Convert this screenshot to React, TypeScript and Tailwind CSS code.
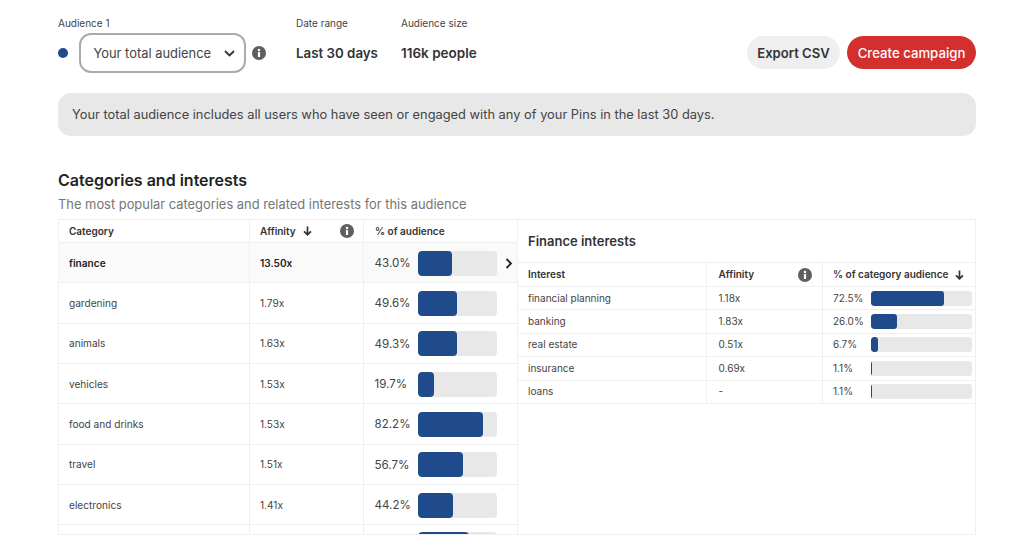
import React from "react";

const Info = ({ size = 14 }: { size?: number }) => (
  <svg width={size} height={size} viewBox="0 0 14 14" className="shrink-0">
    <circle cx="7" cy="7" r="7" fill="#5f5f5f" />
    <circle cx="7" cy="3.9" r="1.25" fill="#fff" />
    <rect x="5.9" y="6" width="2.2" height="5" rx="0.6" fill="#fff" />
  </svg>
);

const Arrow = () => (
  <svg width="9" height="10" viewBox="0 0 9 10" className="shrink-0">
    <path d="M4.5 0.5V8.5M1 5.3L4.5 8.8L8 5.3" fill="none" stroke="#333" strokeWidth="1.7" />
  </svg>
);

const Bar = ({ pct, w, h, small }: { pct: number; w: string; h: string; small?: boolean }) => (
  <div className={`${w} ${h} bg-[#e8e8e8] ${small ? "rounded-[3px]" : "rounded-[4px]"} overflow-hidden shrink-0`}>
    <div className={`h-full bg-[#1f4a8c] ${small ? "rounded-[3px]" : "rounded-[4px]"}`} style={{ width: `${pct}%` }} />
  </div>
);

const cats = [
  ["gardening", "1.79x", "49.6%", 49.6],
  ["animals", "1.63x", "49.3%", 49.3],
  ["vehicles", "1.53x", "19.7%", 19.7],
  ["food and drinks", "1.53x", "82.2%", 82.2],
  ["travel", "1.51x", "56.7%", 56.7],
  ["electronics", "1.41x", "44.2%", 44.2],
] as const;

const ints = [
  ["financial planning", "1.18x", "72.5%", 72.5],
  ["banking", "1.83x", "26.0%", 26],
  ["real estate", "0.51x", "6.7%", 6.7],
  ["insurance", "0.69x", "1.1%", 1.1],
  ["loans", "-", "1.1%", 1.1],
] as const;

const line = "border-[#f0f0f0]";

function CatRow({ r, bold }: { r: readonly [string, string, string, number]; bold?: boolean }) {
  return (
    <div className={`flex h-[40.35px] shrink-0 border-b ${line} ${bold ? "bg-[#fafafa]" : ""}`}>
      <div className={`w-[191px] shrink-0 border-r ${line} pl-[10px] pt-[1px] flex items-center text-[10.1px] ${bold ? "font-semibold text-[#222]" : "text-[#444]"}`}>{r[0]}</div>
      <div className={`w-[114px] shrink-0 border-r ${line} pl-[10px] pt-[1px] flex items-center text-[10.1px] ${bold ? "font-semibold text-[#222]" : "text-[#444]"}`}>{r[1]}</div>
      <div className="flex-1 flex items-center pl-[10.5px] pt-[1px] relative">
        <span className="w-[43.5px] shrink-0 pt-[1px] text-[11.6px] text-[#444]">{r[2]}</span>
        <Bar pct={r[3]} w="w-[79px]" h="h-[25px]" />
        {bold && (
          <svg width="8" height="11" viewBox="0 0 8 11" className="ml-[8px] shrink-0">
            <path d="M1.5 1L6 5.5L1.5 10" fill="none" stroke="#222" strokeWidth="1.8" />
          </svg>
        )}
      </div>
    </div>
  );
}

export default function App() {
  return (
    <div className="w-[1024px] h-[558px] overflow-hidden bg-white pl-[58px] pr-[48px] pt-[17px] font-['Inter',sans-serif] text-[#333]">
      <div className="flex items-start h-[54px]">
        <div className="w-[238px] shrink-0">
          <div className="text-[10px] leading-[13px] text-[#444]">Audience 1</div>
          <div className="flex items-center mt-[3px]">
            <span className="w-[10px] h-[10px] rounded-full bg-[#1f4a8c] shrink-0" />
            <div className="ml-[11px] w-[167px] h-[40px] pt-[1px] rounded-[12px] border-2 border-[#ababab] flex items-center justify-between pl-[12.5px] pr-[9px] text-[12.9px] text-[#444]">
              <span>Your total audience</span>
              <svg width="11" height="7" viewBox="0 0 11 7">
                <path d="M1 1L5.5 5.5L10 1" fill="none" stroke="#333" strokeWidth="1.8" />
              </svg>
            </div>
            <span className="ml-[6px]"><Info /></span>
          </div>
        </div>
        <div className="w-[105px] shrink-0">
          <div className="text-[10px] leading-[13px] text-[#444]">Date range</div>
          <div className="mt-[3px] h-[40px] pt-[1px] flex items-center text-[13.3px] font-semibold text-[#333]">Last 30 days</div>
        </div>
        <div className="shrink-0">
          <div className="text-[10px] leading-[13px] text-[#444]">Audience size</div>
          <div className="mt-[3px] h-[40px] flex items-center text-[13.5px] font-semibold text-[#333]">116k people</div>
        </div>
        <div className="ml-auto flex gap-[7px] mt-[19px]">
          <div className="h-[33px] w-[93px] pt-[2px] rounded-full bg-[#efefef] flex items-center justify-center text-[13.1px] font-semibold text-[#333]">Export CSV</div>
          <div className="h-[33px] w-[129px] pt-[2px] rounded-full bg-[#d32f2f] flex items-center justify-center text-[13.2px] font-medium text-white">Create campaign</div>
        </div>
      </div>

      <div className="mt-[22px] h-[43px] rounded-[13px] bg-[#e8e8e8] flex items-center pl-[14px] text-[12.85px] text-[#444]">
        Your total audience includes all users who have seen or engaged with any of your Pins in the last 30 days.
      </div>

      <h2 className="mt-[34px] text-[16px] leading-[20px] font-semibold text-[#222]">Categories and interests</h2>
      <p className="mt-[6px] text-[12.9px] leading-[18px] text-[#767676]">The most popular categories and related interests for this audience</p>

      <div className={`mt-[5px] h-[316px] flex border ${line} overflow-hidden`}>
        <div className={`w-[459px] shrink-0 border-r ${line} flex flex-col`}>
          <div className={`flex h-[23px] shrink-0 border-b ${line} text-[10px] font-semibold text-[#333]`}>
            <div className={`w-[191px] shrink-0 border-r ${line} pl-[10px] flex items-center`}>Category</div>
            <div className={`w-[114px] shrink-0 border-r ${line} pl-[10px] pr-[9px] flex items-center`}>
              <span>Affinity</span>
              <span className="ml-[7px]"><Arrow /></span>
              <span className="ml-auto"><Info /></span>
            </div>
            <div className="pl-[11px] flex items-center">% of audience</div>
          </div>
          <CatRow r={["finance", "13.50x", "43.0%", 43]} bold />
          {cats.map((r) => <CatRow key={r[0]} r={r} />)}
          <div className="flex h-[13px] shrink-0">
            <div className={`w-[191px] shrink-0 border-r ${line}`} />
            <div className={`w-[114px] shrink-0 border-r ${line}`} />
            <div className="pl-[54px] pt-[7px]"><Bar pct={65} w="w-[79px]" h="h-[25px]" /></div>
          </div>
        </div>

        <div className="flex-1 flex flex-col">
          <div className={`h-[43px] pt-[1px] shrink-0 border-b ${line} flex items-center pl-[10px] text-[13px] font-semibold text-[#333]`}>Finance interests</div>
          <div className={`flex h-[24px] shrink-0 border-b ${line} text-[10px] font-semibold text-[#333]`}>
            <div className={`w-[189px] shrink-0 border-r ${line} pl-[10px] flex items-center`}>Interest</div>
            <div className={`w-[116px] shrink-0 border-r ${line} pl-[11.5px] pr-[10px] flex items-center justify-between`}>
              <span>Affinity</span>
              <Info />
            </div>
            <div className="pl-[10px] flex items-center">
              <span>% of category audience</span>
              <span className="ml-[7px]"><Arrow /></span>
            </div>
          </div>
          {ints.map((r) => (
            <div key={r[0]} className={`flex h-[23.4px] shrink-0 border-b ${line} text-[10px] text-[#444]`}>
              <div className={`w-[189px] shrink-0 border-r ${line} pl-[10px] flex items-center`}>{r[0]}</div>
              <div className={`w-[116px] shrink-0 border-r ${line} pl-[11.5px] flex items-center`}>{r[1]}</div>
              <div className="flex-1 pl-[10px] flex items-center">
                <span className="w-[38px] shrink-0">{r[2]}</span>
                <Bar pct={r[3]} w="w-[101px]" h="h-[15px]" small />
              </div>
            </div>
          ))}
        </div>
      </div>
    </div>
  );
}
